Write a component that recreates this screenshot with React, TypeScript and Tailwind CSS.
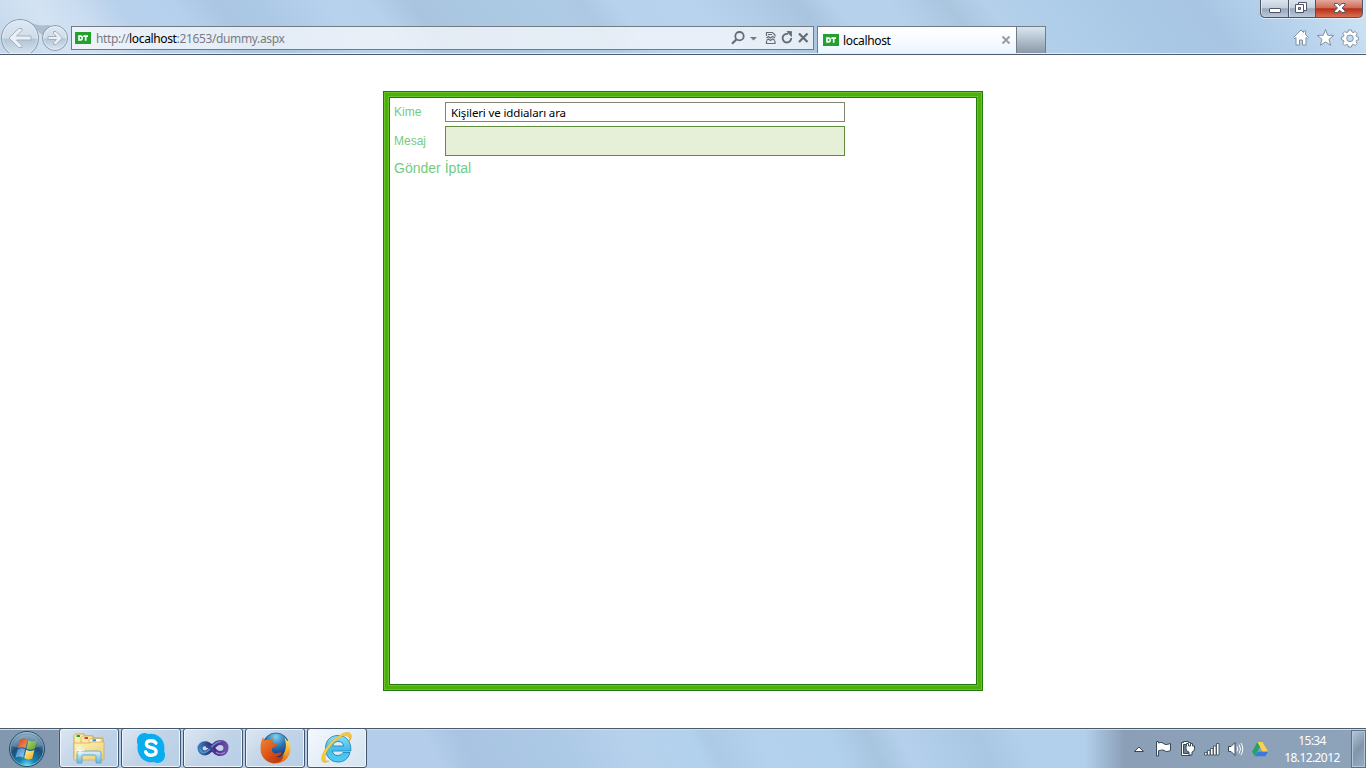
import type { ReactNode } from "react";

const glass =
  "bg-[linear-gradient(53deg,#c3d6ea_0%,#d3e3f3_5%,#cadcf0_8%,#b7d1ec_11%,#b5d0ed_15%,#aac6e3_18%,#abc8e5_21%,#b7d2ed_26%,#b6d1ec_29%,#a9c4df_32%,#abc8e2_36%,#aecbe6_42%,#adc8e2_44%,#b6d2ed_46.5%,#b8d3ee_52%,#b0cce6_56%,#a8c4df_59.5%,#b5d1ec_62%,#b5d1ec_66%,#aac6df_70%,#b4d0eb_73%,#aecde8_78%,#a9c8e5_83%,#a8c6e3_88%,#b5d1ec_93%,#c9dff2_98%,#cde2f4_100%)]";

function Favicon() {
  return (
    <svg width="16" height="12" viewBox="0 0 16 12" className="shrink-0">
      <rect width="16" height="12" fill="#23a12f" />
      <path d="M4 4.2v3.6h2q1.2 0 1.2-1.8T6 4.2zM8.3 4.2H13M10.7 4v4.8" fill="none" stroke="#fff" strokeWidth="1.7" />
    </svg>
  );
}

function NavButtons() {
  return (
    <svg width="71" height="53" viewBox="0 0 71 53" className="shrink-0">
      <defs>
        <linearGradient id="nav" x2="0" y2="1">
          <stop offset="0" stopColor="#dce7f2" />
          <stop offset=".5" stopColor="#d0deea" />
          <stop offset=".54" stopColor="#b2c6d8" />
          <stop offset="1" stopColor="#dce8f2" />
        </linearGradient>
      </defs>
      <path d="M27 20q8 7 21 5l6 2-12 8z" fill="#9fb2c6" opacity=".75" />
      <circle cx="20" cy="38" r="18.5" fill="url(#nav)" stroke="#8c9cab" />
      <circle cx="20" cy="38" r="17.3" fill="none" stroke="#edf4fa" strokeOpacity=".5" />
      <circle cx="55" cy="38" r="12.5" fill="url(#nav)" stroke="#8c9cab" />
      <circle cx="55" cy="38" r="11.4" fill="none" stroke="#edf4fa" strokeOpacity=".5" />
      <path d="M9 38l9.5-9.5h3.5v2L16.5 36H31v4H16.5l5.500 5.500v2h-3.500z" fill="#e9eff5" stroke="#a3b1bf" />
      <path d="M62.500 38l-6.500-6.500h-2.500v2l3 3H48v3h8.500l-3 3v2H56z" fill="#e9eff5" stroke="#a3b1bf" />
    </svg>
  );
}

function AddressIcons() {
  return (
    <svg width="83" height="18" viewBox="0 0 83 18" className="shrink-0" fill="none" stroke="#646d76">
      <circle cx="9.500" cy="7.200" r="4.200" strokeWidth="1.800" />
      <path d="M6.500 10.200L2 14.700" strokeWidth="2.200" />
      <path d="M20 8h7l-3.500 3.500z" fill="#737b83" stroke="none" />
      <path d="M36.500 7V3.500h6L45 6v1.500M36.500 12v2.500H45V12M36.500 9l2-1.500 2 1.500 2-1.500 2.500 1.500M36.500 11.500l2-1.500 2 1.500 2-1.500 2.500 1.500M38 5.500h4" strokeWidth="1.200" />
      <path d="M58 5A4.300 4.300 0 1 0 61.200 9" strokeWidth="1.900" />
      <path d="M57 2.500h4.500V7.500z" fill="#646d76" stroke="#646d76" strokeWidth=".8" />
      <path d="M69 4.500l8.500 8.500M77.500 4.500L69 13" strokeWidth="2.200" />
    </svg>
  );
}

function WindowControls() {
  return (
    <svg width="104" height="19" viewBox="0 0 104 19" className="shrink-0">
      <defs>
        <linearGradient id="cap" x2="0" y2="1">
          <stop offset="0" stopColor="#dbe5ef" />
          <stop offset=".45" stopColor="#c2cedb" />
          <stop offset=".5" stopColor="#96a7ba" />
          <stop offset="1" stopColor="#bccbdc" />
        </linearGradient>
        <linearGradient id="close" x2="0" y2="1">
          <stop offset="0" stopColor="#e3a99d" />
          <stop offset=".45" stopColor="#cf6a57" />
          <stop offset=".5" stopColor="#b72e16" />
          <stop offset="1" stopColor="#db7556" />
        </linearGradient>
      </defs>
      <path d="M.5 0v14q0 4.500 4 4.500h94.500q4 0 4-4.500V0" fill="none" stroke="#e9f2fa" strokeOpacity=".8" />
      <path d="M0.500 0H56v17.500H4.500q-4 0-4-4z" fill="url(#cap)" />
      <path d="M56 0h46.500v13.500q0 4-4 4H56z" fill="url(#close)" />
      <path d="M.5 0v13.500q0 4 4 4h94q4 0 4-4V0M28.500 0v17M55.500 0v17" fill="none" stroke="#4c5566" />
      <path d="M29.500 0v17M1.500 0v13" stroke="#e8f0f7" strokeOpacity=".7" />
      <rect x="9.500" y="8.500" width="11" height="4" rx=".5" fill="#fff" stroke="#50556a" />
      <path d="M38.500 2.500h8v8h-8z" fill="#fff" stroke="#50556a" />
      <path d="M35.500 4.500h8v8h-8z" fill="#fff" stroke="#50556a" />
      <path d="M38.500 7.500h2v2h-2z" fill="#a5b5c8" stroke="#50556a" />
      <path d="M74.500 3.500h3l2.200 2.300 2.300-2.300h3v1.500l-3 3 3 3v1.500h-3l-2.300-2.300-2.200 2.300h-3V11l3-3-3-3z" fill="#fff" stroke="#53566a" />
    </svg>
  );
}

function CommandIcons() {
  return (
    <svg width="68" height="20" viewBox="0 0 68 20" className="mr-[7px]" fill="#fff" stroke="#8191a2" strokeLinejoin="round">
      <path d="M2.500 9.500L10 2l2.500 2.500V3h2v3.500l3 3-1 1-1.500-1V17h-3.500v-5H8.500v5H5V9.500l-1.500 1z" />
      <path d="M34.500 1.500l2.200 5.700 6 .3-4.700 3.800 1.700 6-5.200-3.400-5.200 3.400 1.700-6-4.700-3.800 6-.3z" />
      <path fillRule="evenodd" d="M57.500 2h3l.5 2 1.300.6 1.900-1.100 2 2-1.100 1.900.5 1.300 2 .5v2.600l-2 .5-.5 1.400 1.100 1.800-2 2-1.900-1.100-1.300.6-.5 2h-3l-.5-2-1.300-.6-1.900 1.100-2-2 1.100-1.800-.5-1.400-2-.5V9.200l2-.5.5-1.300-1.100-1.900 2-2 1.900 1.100L57 4zM59 7a3.300 3.300 0 1 0 0 6.600A3.300 3.300 0 0 0 59 7z" />
    </svg>
  );
}

function BrowserChrome() {
  return (
    <header className={`flex h-[55px] shrink-0 border-b border-[#4d5a6b] ${glass}`}>
      <div className="flex w-full border-b border-[#e4eff9]">
        <NavButtons />
        <div className="mt-[26px] flex h-6 w-[743px] shrink-0 items-center border border-[#737b84] bg-[#f8f8fb]/75 pl-[3px]">
          <Favicon />
          <span className="ml-[5px] grow whitespace-pre pt-[2px] text-[12px] leading-[16px] tracking-[-0.36px] text-[#777c83]">
            http://<span className="text-black">localhost</span>:21653/dummy.aspx
          </span>
          <AddressIcons />
        </div>
        <div className="ml-[3px] mt-[26px] flex h-[27px] w-[200px] shrink-0 items-center border border-b-0 border-[#737b84] bg-[linear-gradient(#ffffff,#f6faff_60%,#e9f5ff)] pl-[5px]">
          <Favicon />
          <span className="ml-1 grow pt-[2px] text-[12px] leading-[16px] tracking-[-0.35px] text-black">localhost</span>
          <svg width="10" height="10" viewBox="0 0 10 10" className="mr-[5px]">
            <path d="M1.500 1.500l7 7M8.500 1.500l-7 7" stroke="#999ea4" strokeWidth="2" />
          </svg>
        </div>
        <div className="mt-[26px] h-[27px] w-[29px] shrink-0 border border-b-0 border-l-0 border-[#737b84] bg-[linear-gradient(#d9e6f2,#b6c4d1_45%,#8b99a7)]" />
        <div className="flex grow flex-col items-end justify-between pb-[5px]">
          <div className="mr-[2px]">
            <WindowControls />
          </div>
          <CommandIcons />
        </div>
      </div>
    </header>
  );
}

function MessageForm() {
  return (
    <main className="flex grow justify-center bg-white pt-9">
      <section className="h-[600px] w-[600px] border border-[#21780b] bg-white">
        <div className="h-full border border-[#68c22b]">
          <div className="h-full border-[3px] border-[#4caf0c]">
            <div className="h-full border border-[#68c22b]">
              <div className="h-full border border-[#21780b] px-1 pt-1 font-['Liberation_Sans',sans-serif] text-[#73cb83]">
                <div className="flex h-5 items-center text-[12px]">
                  <label className="w-[51px]">Kime</label>
                  <div className="h-5 w-[400px] border border-[#85856f] bg-white pl-[5px] font-['Noto_Sans',sans-serif] text-[11.5px] leading-[19px] tracking-[-0.13px] text-black">
                    Kişileri ve iddiaları ara
                  </div>
                </div>
                <div className="mt-1 flex h-[30px] items-center text-[12px]">
                  <label className="w-[51px]">Mesaj</label>
                  <div className="h-[30px] w-[400px] border border-[#5d8c3c] bg-[#e6f0d8]" />
                </div>
                <div className="mt-1 flex gap-1 text-[14px] leading-4">
                  <a>Gönder</a>
                  <a>İptal</a>
                </div>
              </div>
            </div>
          </div>
        </div>
      </section>
    </main>
  );
}

function StartOrb() {
  return (
    <svg width="38" height="38" viewBox="0 0 38 38">
      <defs>
        <radialGradient id="orb" cx=".5" cy=".98" r=".95">
          <stop offset="0" stopColor="#5ce6f8" />
          <stop offset=".25" stopColor="#1c83b0" />
          <stop offset=".6" stopColor="#1b4f78" />
          <stop offset="1" stopColor="#86a9c2" />
        </radialGradient>
        <linearGradient id="red" x2="1" y2="1"><stop stopColor="#d83a18" /><stop offset="1" stopColor="#f7a05c" /></linearGradient>
        <linearGradient id="grn" x2="1" y2="1"><stop stopColor="#b5da70" /><stop offset="1" stopColor="#5f9c2c" /></linearGradient>
        <linearGradient id="blu" x2="1" y2="1"><stop stopColor="#3a7fc8" /><stop offset="1" stopColor="#9ad0f4" /></linearGradient>
        <linearGradient id="yel" x2="1" y2="1"><stop stopColor="#fff0a0" /><stop offset="1" stopColor="#f2a916" /></linearGradient>
      </defs>
      <circle cx="19" cy="19" r="17.500" fill="url(#orb)" stroke="#2a4c66" />
      <circle cx="19" cy="19" r="16.500" fill="none" stroke="#b5d8ea" strokeOpacity=".5" />
      <path d="M4 16a15.500 15.500 0 0 1 30 0q-15 5-30 0z" fill="#fff" opacity=".18" />
      <path d="M12 9.800q4.300-2.400 7.300-.2L17.400 18q-3.500-2.200-7.500.1z" fill="url(#red)" />
      <path d="M20.500 10.200q3.800 2.600 8.300.2L26.700 18.800q-4.300 2.200-8.200-.2z" fill="url(#grn)" />
      <path d="M9.600 19.400q4-2.300 7.500-.1l-2 8.400q-3.600-2.200-7.600 0z" fill="url(#blu)" />
      <path d="M18.200 19.800q3.900 2.300 8.200.2l-2.100 8.400q-4.200 2.100-8.100-.3z" fill="url(#yel)" />
    </svg>
  );
}

function ExplorerIcon() {
  return (
    <svg width="34" height="32" viewBox="0 0 34 32">
      <defs>
        <linearGradient id="folder" x2="1" y2="1"><stop stopColor="#fff3b8" /><stop offset="1" stopColor="#ebcd72" /></linearGradient>
        <linearGradient id="stand" x2="0" y2="1"><stop stopColor="#dff4fb" /><stop offset="1" stopColor="#68b6dc" /></linearGradient>
      </defs>
      <path d="M2 26V3.500L3.500 2H12l1 2h8l1 2h9v20z" fill="url(#folder)" stroke="#c3a252" strokeWidth=".9" />
      <path d="M9 10V5.500L10.500 4H20l1 2.500h10V26H9z" fill="#fbe9a2" stroke="#cdb064" strokeWidth=".8" />
      <path d="M17 11V8l1-1.500h11l1 1.500v3" fill="#fdf0b8" stroke="#cdb064" strokeWidth=".8" />
      <path d="M2 28V11h16l1-1h13v18z" fill="url(#folder)" stroke="#cdb064" strokeWidth=".8" />
      <path d="M4.500 4h3.500" stroke="#22a333" strokeWidth="2" />
      <path d="M12.500 6h3.500" stroke="#e03c2c" strokeWidth="2" />
      <path d="M20.500 8.300h7.500" stroke="#fff" strokeWidth="2" />
      <path d="M20.500 8.300h3.500" stroke="#338dd6" strokeWidth="2" />
      <path d="M5 31V21.500q0-2.500 2.500-2.500h19q2.500 0 2.500 2.500V31h-5v-6.500q0-1.500-1.500-1.500h-11q-1.500 0-1.500 1.500V31z" fill="url(#stand)" stroke="#63a2c4" strokeWidth=".9" />
      <path d="M8 14v9M3.500 18.500h9M5 15.500l6 6M11 15.500l-6 6" stroke="#fff" strokeWidth=".8" />
    </svg>
  );
}

function SkypeIcon() {
  return (
    <svg width="30" height="32" viewBox="0 0 32 32" preserveAspectRatio="none">
      <path d="M9 1C4 1 1 5 1 9q0 2 .9 4A14.300 14.300 0 0 0 19 30q2 1 4 1c5 0 8-4 8-8q0-2-1-4A14.300 14.300 0 0 0 13 2Q11 1 9 1z" fill="#08adef" />
      <path d="M21.300 11.200Q20 8.700 16 8.700q-5 0-5 3.400 0 2.500 5 3.500 5.500 1 5.500 4 0 3.700-5.500 3.700-4.600 0-5.800-3.500" fill="none" stroke="#fff" strokeWidth="3.500" strokeLinecap="round" />
    </svg>
  );
}

function StudioIcon() {
  return (
    <svg width="32" height="18" viewBox="0 0 32 18">
      <defs>
        <linearGradient id="vs"><stop stopColor="#3a78b8" /><stop offset=".3" stopColor="#2f3f86" /><stop offset=".6" stopColor="#54238a" /><stop offset="1" stopColor="#6a4fa6" /></linearGradient>
        <linearGradient id="vsLoop"><stop stopColor="#2d4f92" /><stop offset="1" stopColor="#5b2a90" /></linearGradient>
      </defs>
      <path d="M16 9.500C13 6 11 4.800 8 4.800c-3 0-5 1.700-5 4.500s2 4.700 5 4.700c6 0 8-10.500 15-10.500 4 0 6 2 6 5.500s-2.500 5.500-6 5.500c-3 0-5-2-7-4.500z" fill="none" stroke="url(#vs)" strokeWidth="5" />
      <path d="M3 10q1.500 5.500 7 2.500C14.500 9.500 17 2.500 24 2.500" fill="none" stroke="#4d9bcb" strokeWidth="1.500" />
      <path d="M9 7.500q4 0 7 4t7 4" fill="none" stroke="url(#vsLoop)" strokeWidth="2.500" />
      <path d="M19 13q4 3.500 9 0" fill="none" stroke="#8f8cc8" strokeWidth="1.200" />
    </svg>
  );
}

function FirefoxIcon() {
  return (
    <svg width="32" height="32" viewBox="0 0 34 34">
      <defs>
        <radialGradient id="globe" cx=".5" cy=".15" r=".75"><stop stopColor="#7fd4f2" /><stop offset=".5" stopColor="#2a76b8" /><stop offset="1" stopColor="#17306c" /></radialGradient>
        <linearGradient id="fox" x2=".8" y2="1"><stop stopColor="#ee8b2c" /><stop offset=".5" stopColor="#e05a1c" /><stop offset="1" stopColor="#b8330f" /></linearGradient>
        <linearGradient id="tail" x2="0" y2="1"><stop stopColor="#ffec7c" /><stop offset=".5" stopColor="#f7b02b" /><stop offset="1" stopColor="#dc5f17" /></linearGradient>
      </defs>
      <circle cx="18" cy="15" r="14" fill="url(#globe)" stroke="#1d3f78" strokeWidth=".7" />
      <path d="M27 6q2 1 3 4l1-2q4 8 1.500 15Q29 33 17 33.500c-5 0-8-2-10-4 8 2 16-1 19-6 3-5 3.500-11 1-17.500z" fill="url(#tail)" />
      <path d="M4.500 5q0 2.500 1.500 4 3-1.500 6-.5l3-2.500q-1.500 3-.5 5.500 3 1.200 5 1-.5 2.500-5.500 4.500-1 3.500 1.500 5 3 1.500 7-.5 1.500.2 1.500 1-2 4-7 4 6 1.500 9.500-2.500Q25 33 16 33 5 32 2 22 .5 12 4.500 5z" fill="url(#fox)" />
    </svg>
  );
}

function ExplorerBrowserIcon() {
  return (
    <svg width="34" height="34" viewBox="0 0 34 34">
      <defs>
        <linearGradient id="ie" x2="0" y2="1"><stop stopColor="#8be0f9" /><stop offset=".5" stopColor="#45bdea" /><stop offset="1" stopColor="#4fcdf3" /></linearGradient>
        <linearGradient id="ring" x2="1" y2="1"><stop stopColor="#ffe66d" /><stop offset="1" stopColor="#e8a90c" /></linearGradient>
      </defs>
      <path fillRule="evenodd" d="M18 4.500C10 4.500 5.500 10 5.500 17.500s5 13.500 12.500 13.500c6 0 10.500-3.500 12-9.500H23q-1.300 3-5 3-5 0-5.500-4.500h18.300C31.500 10.500 26 4.500 18 4.500zM12.700 15q1-4.500 5.500-4.500t5.500 4.500z" fill="url(#ie)" stroke="#1d83b9" strokeWidth=".9" />
      <path d="M29.500 10.500C33.500 4 30.500-.5 23 2.500 12 7.500 0 22 2 29.500q1.200 3.500 7 .5Q5 31 5 27C5 19.500 15 8.500 23 5q7-2 6.500 5.500z" fill="url(#ring)" stroke="#d7a313" strokeWidth=".5" />
    </svg>
  );
}

function TaskButton({ children, active = false }: { children: ReactNode; active?: boolean }) {
  const face = active
    ? "bg-[linear-gradient(135deg,#f5f9fd,#e1ebf6_55%,#d5e3f1)]"
    : "bg-[linear-gradient(135deg,#dde7f2,#c1d3e7_50%,#b7cfe8)]";
  return (
    <div className={`flex h-10 w-[60px] items-center justify-center rounded-[3px] border border-[#43566b] shadow-[inset_0_0_0_1px_#edf4fb] ${face}`}>
      {children}
    </div>
  );
}

function TrayIcons() {
  return (
    <svg width="140" height="20" viewBox="0 0 140 20" className="shrink-0" fill="#fff" stroke="#394857" strokeWidth="1" strokeLinejoin="round">
      <path d="M5.500 12.500L10 8l4.500 4.500z" />
      <path d="M27.500 2.500h2v1.500q2.500-1.200 4.500 0 1.500 1.500 3 1.500t4.500-1v7q-2.500 1.500-5 .8-1.500-1.300-3-1.300t-4 .8V17h-2z" />
      <path d="M52.500 3.500h2v-1h5v1h2v13h-9z" />
      <path d="M54.500 5.500h5v9h-5z" fill="#6c7f94" />
      <path d="M57.500 4.500h2V7h2V4.500h2V7h2v3q0 2.500-2.500 3V16h-3v-3q-3-.5-3-3V7h.5z" />
      <g strokeWidth=".8">
        <path d="M75.500 13.500h2.500v2.500h-2.500zM78.500 11.500h2.500v4.500h-2.500zM81.500 9.500H84v6.500h-2.500zM84.500 7H87v9h-2.500zM87.500 4.500H90v11.500h-2.500z" />
      </g>
      <path d="M99.500 7.500h2.500l4-4v13l-4-4h-2.500z" />
      <path d="M108 7.500q1.500 2.500 0 5M110 5.500q3 4.500 0 9M112 4q3.500 6 0 12" fill="none" stroke="#fff" />
      <g stroke="none">
        <path d="M128.500 3h5l5.500 9.500h-5.500z" fill="#fbd248" />
        <path d="M128.200 3.300L123 12.700l2.800 4.500 5.200-9z" fill="#24a567" />
        <path d="M128.700 12.800H139l-2.800 4.500h-10.300z" fill="#3878e0" />
      </g>
    </svg>
  );
}

function Taskbar() {
  return (
    <footer className="flex h-10 shrink-0 border-t border-[#4d5a6a] bg-[linear-gradient(90deg,#8298af_0,#8499b0_58px,transparent_61px,transparent_1085px,#8ba0b7_1124px,#8da3b9_1366px),linear-gradient(65deg,#b3cdea_0,#b3cdea_400px,#a8c4e2_430px,#acc9e6_520px,#b6d1ec_580px,#b2d1ed_640px,#accae6_655px,#b4d1ed_700px,#b2d1ed_765px,#a8c5df_800px,#b4d0ec_830px,#a9c7e2_900px,#b2cfeb_940px,#b2cfeb_1100px)]">
      <div className="flex w-full border-t border-[#cddfee]">
        <div className="flex w-[59px] shrink-0 justify-center pr-[5px]">
          <StartOrb />
        </div>
        <nav className="-mt-0.5 flex gap-0.5">
          <TaskButton><ExplorerIcon /></TaskButton>
          <TaskButton><SkypeIcon /></TaskButton>
          <TaskButton><StudioIcon /></TaskButton>
          <TaskButton><FirefoxIcon /></TaskButton>
          <TaskButton active><ExplorerBrowserIcon /></TaskButton>
        </nav>
        <div className="flex grow items-center justify-end text-white">
          <TrayIcons />
          <div className="ml-[5px] w-[77px] pr-[1px] text-center text-[12px] leading-[17px] tracking-[-0.6px]">
            <div>15:34</div>
            <div>18.12.2012</div>
          </div>
        </div>
        <div className="h-full w-[15px] shrink-0 border border-[#5c7085] bg-[linear-gradient(135deg,#b5c7d8,#8095ab_50%,#97adc2)] shadow-[inset_0_0_0_1px_#b3c6d8]" />
      </div>
    </footer>
  );
}

export default function App() {
  return (
    <div className="flex h-[768px] w-[1366px] flex-col overflow-hidden bg-white font-['Noto_Sans',sans-serif]">
      <BrowserChrome />
      <MessageForm />
      <Taskbar />
    </div>
  );
}
